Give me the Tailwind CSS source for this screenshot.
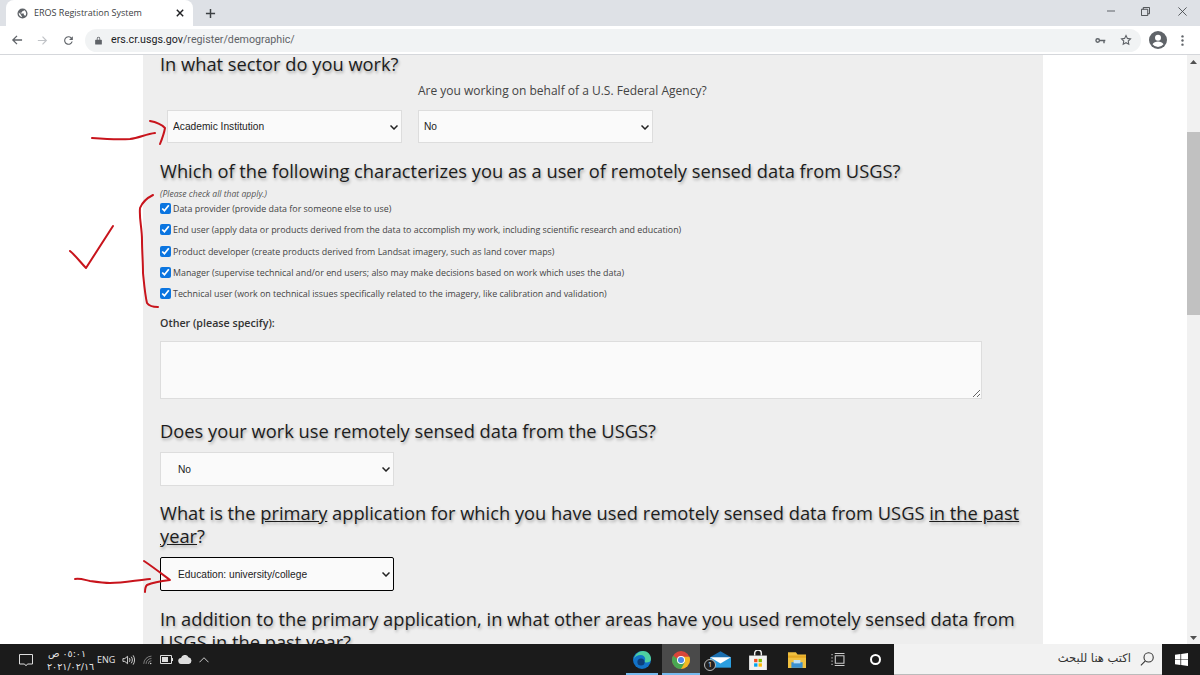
<!DOCTYPE html>
<html lang="en">
<head>
    <meta charset="UTF-8">
    <title>EROS Registration System</title>
    <script src="https://cdn.jsdelivr.net/npm/@tailwindcss/browser@4"></script>
</head>
<body class="h-[675px] w-[1200px] overflow-hidden bg-white font-['Open_Sans',sans-serif] relative flex flex-col">

    <!-- tab strip -->
    <div class="h-[26px] bg-[#dee1e6] flex items-end shrink-0 relative">
        <div class="ml-[6px] w-[187px] h-[26px] bg-white rounded-t-lg flex items-center pl-[11px]">
            <svg class="w-[11px] h-[11px] shrink-0" viewBox="0 0 24 24"><path fill="#5f6368" d="M12 1a11 11 0 1 0 0 22 11 11 0 0 0 0-22zm-1 18.900A8 8 0 0 1 4.200 10L9 15v1c0 1.100.9 2 2 2v1.900zm6.900-2.500A2 2 0 0 0 16 16h-1v-3c0-.6-.4-1-1-1H8v-2h2c.6 0 1-.4 1-1V7h2c1.100 0 2-.9 2-2v-.4a8 8 0 0 1 2.900 12.800z"/></svg>
            <span class="ml-[6px] text-[9px] text-[#3c4043] whitespace-nowrap">EROS Registration System</span>
            <svg class="ml-auto w-[8px] h-[8px] mr-[9px]" viewBox="0 0 10 10"><path d="M1 1l8 8M9 1l-8 8" stroke="#202124" stroke-width="1.800"/></svg>
        </div>
        <svg class="ml-[12px] mb-[7px] w-[11px] h-[11px]" viewBox="0 0 12 12"><path d="M6 1v10M1 6h10" stroke="#3c4043" stroke-width="1.600"/></svg>
        <svg class="absolute left-[1107px] top-[10px] w-[8px] h-[2px]" viewBox="0 0 8 2"><path d="M0 1h8" stroke="#5f6368"/></svg>
        <svg class="absolute left-[1141px] top-[7px] w-[9px] h-[9px]" viewBox="0 0 10 10" fill="none" stroke="#3c4043"><path d="M.5 2.500h7v7h-7zM2.500 2.500v-2h7v7h-2"/></svg>
        <svg class="absolute left-[1178px] top-[7px] w-[9px] h-[9px]" viewBox="0 0 11 11"><path d="M.5.5l10 10M10.500.5l-10 10" stroke="#3c4043"/></svg>
    </div>

    <!-- toolbar -->
    <div class="h-[29px] bg-white border-b border-[#d5d7db] flex items-center shrink-0">
        <svg class="ml-[11px] w-[12px] h-[12px]" viewBox="0 0 13 13" fill="none" stroke="#5f6368" stroke-width="1.400"><path d="M12 6.500H2M6.500 2l-4.500 4.500 4.500 4.500"/></svg>
        <svg class="ml-[14px] w-[11px] h-[11px]" viewBox="0 0 13 13" fill="none" stroke="#c0c3c7" stroke-width="1.400"><path d="M1 6.500h10M6.500 2l4.500 4.500-4.500 4.500"/></svg>
        <svg class="ml-[14px] w-[13px] h-[13px]" viewBox="0 0 24 24"><path fill="#5f6368" d="M17.650 6.350A8 8 0 1 0 19.730 14h-2.080a6 6 0 1 1-1.410-6.240L13 11h7V4l-2.350 2.350z"/></svg>
        <div class="ml-[10px] w-[1056px] h-[23px] rounded-full bg-[#f1f3f4] flex items-center pl-[10px] pr-[9px]">
            <svg class="w-[7px] h-[9px]" viewBox="0 0 9 11"><path fill="#5f6368" d="M1 4.500h7a.8.8 0 0 1 .8.8v4.700a.8.8 0 0 1-.8.800H1a.8.8 0 0 1-.8-.8V5.300A.8.8 0 0 1 1 4.500zM2.300 4.500V3a2.200 2.200 0 0 1 4.400 0v1.500H5.700V3a1.200 1.200 0 0 0-2.400 0v1.500z"/></svg>
            <span class="ml-[9px] text-[10.700px] font-['Roboto',sans-serif] text-[#202124] whitespace-nowrap">ers.cr.usgs.gov<span class="text-[#5f6368]">/register/demographic/</span></span>
            <svg class="ml-auto w-[11px] h-[7px]" viewBox="0 0 12 8" fill="none" stroke="#5f6368" stroke-width="1.600"><circle cx="2.800" cy="4" r="2"/><path d="M5 4h6.500M10 4v3"/></svg>
            <svg class="ml-[14px] w-[12px] h-[12px]" viewBox="0 0 24 24" fill="none" stroke="#5f6368" stroke-width="2.200"><path d="M12 3l2.800 5.800 6.200.9-4.500 4.400 1.100 6.300-5.600-3-5.600 3 1.100-6.300L3 9.700l6.200-.9z"/></svg>
        </div>
        <svg class="ml-[8px] w-[18px] h-[18px]" viewBox="0 0 18 18"><circle cx="9" cy="9" r="9" fill="#5f6368"/><circle cx="9" cy="6.800" r="3" fill="#fff"/><path fill="#fff" d="M3.500 13.300c1-1.900 3.300-2.800 5.500-2.800s4.500.9 5.500 2.800A7 7 0 0 1 9 16a7 7 0 0 1-5.500-2.700z"/></svg>
        <svg class="ml-[14px] w-[3px] h-[11px]" viewBox="0 0 3 12"><g fill="#5f6368"><circle cx="1.500" cy="1.500" r="1.300"/><circle cx="1.500" cy="6" r="1.300"/><circle cx="1.500" cy="10.500" r="1.300"/></g></svg>
    </div>

    <!-- page -->
    <div class="flex-1 min-h-0 flex overflow-hidden">
        <div class="ml-[143px] w-[900px] bg-[#eeeeee] px-[17px] shrink-0 text-[#333] h-full overflow-hidden">
            <h2 class="-mt-[1px] text-[18.300px] leading-[20px] font-medium text-[#1c1c1c] [text-shadow:1px_2px_3px_rgba(0,0,0,0.3)]">In what sector do you work?</h2>
            <div class="flex gap-[16px] pl-[7px] mt-[7px]">
                <div class="w-[235px] pt-[29px]">
                    <div class="relative">
                        <select class="block appearance-none w-full h-[33px] bg-[#fafafa] border border-[#ddd] text-[10.200px] text-[#222] pl-[5px] font-['Liberation_Sans',sans-serif]"><option>Academic Institution</option></select>
                        <svg class="absolute right-[4px] top-[15px] w-[8px] h-[5px]" viewBox="0 0 8 5" fill="none" stroke="#222" stroke-width="1.500"><path d="M.5.5L4 4 7.500.5"/></svg>
                    </div>
                </div>
                <div class="w-[235px]">
                    <div class="text-[12px] leading-[19px] text-[#444] whitespace-nowrap mb-[10px]">Are you working on behalf of a U.S. Federal Agency?</div>
                    <div class="relative">
                        <select class="block appearance-none w-full h-[33px] bg-[#fafafa] border border-[#ddd] text-[10.200px] text-[#222] pl-[5px] font-['Liberation_Sans',sans-serif]"><option>No</option></select>
                        <svg class="absolute right-[4px] top-[15px] w-[8px] h-[5px]" viewBox="0 0 8 5" fill="none" stroke="#222" stroke-width="1.500"><path d="M.5.5L4 4 7.500.5"/></svg>
                    </div>
                </div>
            </div>

            <h2 class="mt-[15px] text-[18.300px] leading-[26px] font-medium text-[#1c1c1c] [text-shadow:1px_2px_3px_rgba(0,0,0,0.3)]">Which of the following characterizes you as a user of remotely sensed data from USGS?</h2>
            <p class="mt-[6px] text-[8.600px] leading-[8px] italic text-[#555]">(Please check all that apply.)</p>
            <ul class="text-[8.900px] text-[#444]">
                <li class="flex items-center h-[21.300px]"><input type="checkbox" checked class="m-0 mr-[2px] w-[11px] h-[11px] accent-[#0b75e0]"><span class="whitespace-nowrap">Data provider (provide data for someone else to use)</span></li>
                <li class="flex items-center h-[21.300px]"><input type="checkbox" checked class="m-0 mr-[2px] w-[11px] h-[11px] accent-[#0b75e0]"><span class="whitespace-nowrap">End user (apply data or products derived from the data to accomplish my work, including scientific research and education)</span></li>
                <li class="flex items-center h-[21.300px]"><input type="checkbox" checked class="m-0 mr-[2px] w-[11px] h-[11px] accent-[#0b75e0]"><span class="whitespace-nowrap">Product developer (create products derived from Landsat imagery, such as land cover maps)</span></li>
                <li class="flex items-center h-[21.300px]"><input type="checkbox" checked class="m-0 mr-[2px] w-[11px] h-[11px] accent-[#0b75e0]"><span class="whitespace-nowrap">Manager (supervise technical and/or end users; also may make decisions based on work which uses the data)</span></li>
                <li class="flex items-center h-[21.300px]"><input type="checkbox" checked class="m-0 mr-[2px] w-[11px] h-[11px] accent-[#0b75e0]"><span class="whitespace-nowrap">Technical user (work on technical issues specifically related to the imagery, like calibration and validation)</span></li>
            </ul>
            <p class="mt-[10px] text-[10.700px] leading-[18px] font-semibold text-[#333]">Other (please specify):</p>
            <textarea class="block mt-[9px] w-[822px] h-[58px] bg-[#fafafa] border border-[#ddd]"></textarea>

            <h2 class="mt-[19px] text-[18.300px] leading-[26px] font-medium text-[#1c1c1c] [text-shadow:1px_2px_3px_rgba(0,0,0,0.3)]">Does your work use remotely sensed data from the USGS?</h2>
            <div class="relative mt-[8px] w-[234px]">
                <select class="block appearance-none w-full h-[34px] bg-[#fafafa] border border-[#ddd] text-[10.200px] text-[#222] pl-[17px] font-['Liberation_Sans',sans-serif]"><option>No</option></select>
                <svg class="absolute right-[4px] top-[15px] w-[8px] h-[5px]" viewBox="0 0 8 5" fill="none" stroke="#222" stroke-width="1.500"><path d="M.5.5L4 4 7.500.5"/></svg>
            </div>

            <h2 class="mt-[15px] text-[18.300px] leading-[23px] font-medium text-[#1c1c1c] [text-shadow:1px_2px_3px_rgba(0,0,0,0.3)]">What is the <u>primary</u> application for which you have used remotely sensed data from USGS <u>in the past year</u>?</h2>
            <div class="relative mt-[10px] w-[234px]">
                <select class="block appearance-none w-full h-[34px] bg-[#fafafa] border border-black rounded-[2px] text-[10.200px] text-[#222] pl-[17px] font-['Liberation_Sans',sans-serif]"><option>Education: university/college</option></select>
                <svg class="absolute right-[4px] top-[15px] w-[8px] h-[5px]" viewBox="0 0 8 5" fill="none" stroke="#222" stroke-width="1.500"><path d="M.5.5L4 4 7.500.5"/></svg>
            </div>

            <h2 class="mt-[16px] text-[18.300px] leading-[23px] font-medium text-[#1c1c1c] [text-shadow:1px_2px_3px_rgba(0,0,0,0.3)]">In addition to the primary application, in what other areas have you used remotely sensed data from USGS in the past year?</h2>
        </div>
        <!-- scrollbar -->
        <div class="ml-auto w-[13px] bg-[#f1f1f1] flex flex-col items-center shrink-0">
            <div class="h-[13px] flex items-center justify-center"><svg class="w-[7px] h-[4px]" viewBox="0 0 7 4"><path d="M3.500 0L7 4H0z" fill="#505050"/></svg></div>
            <div class="mt-[64px] w-full h-[183px] bg-[#c1c1c1]"></div>
            <div class="mt-auto h-[13px] flex items-center justify-center"><svg class="w-[7px] h-[4px]" viewBox="0 0 7 4"><path d="M3.500 4L7 0H0z" fill="#505050"/></svg></div>
        </div>
    </div>

    <!-- taskbar -->
    <div class="h-[31px] bg-[#1b1b1b] flex items-center shrink-0 text-[#e6e6e6]">
        <svg class="ml-[19px] w-[14px] h-[14px]" viewBox="0 0 14 14" fill="none" stroke="#ddd"><path d="M.5 1.500h13v9.500H8.500L7 12.800 5.500 11H.5z"/></svg>
        <div class="ml-[14px] w-[40px] text-[9.500px] leading-[13px] text-center font-['DejaVu_Sans',sans-serif] whitespace-nowrap">
            <div dir="rtl">٠٥:٠١ ص</div>
            <div>٢٠٢١/٠٢/١٦</div>
        </div>
        <span class="ml-[10px] w-[17px] text-[9px]">ENG</span>
        <svg class="ml-[8px] w-[13px] h-[12px]" viewBox="0 0 14 12" fill="none" stroke="#ddd"><path d="M1 4.500h2L6 2v8L3 7.500H1zM8 4c.7 1 .7 3 0 4M10 2.500c1.500 2 1.500 5 0 7M12 1c2 3 2 7 0 10"/></svg>
        <svg class="ml-[8px] w-[10px] h-[10px]" viewBox="0 0 13 12" fill="none" stroke="#999"><path d="M1 11a10 10 0 0 1 10-10M4 11a7 7 0 0 1 7-7M7 11a4 4 0 0 1 4-4"/><circle cx="10" cy="10.500" r="1" fill="#ddd" stroke="none"/></svg>
        <svg class="ml-[7px] w-[13px] h-[9px]" viewBox="0 0 13 9"><path d="M.5.500h11v8H.5z" fill="none" stroke="#ddd"/><rect x="2" y="2" width="6" height="5" fill="#ddd"/><rect x="12" y="3" width="1" height="3" fill="#ddd"/></svg>
        <svg class="ml-[5px] w-[14px] h-[9px]" viewBox="0 0 14 9"><path fill="#ddd" d="M3.500 9a3 3 0 0 1-.5-6 4 4 0 0 1 7.500-.8A3.500 3.500 0 0 1 11 9z"/></svg>
        <svg class="ml-[7px] w-[10px] h-[6px]" viewBox="0 0 11 6" fill="none" stroke="#ddd"><path d="M.5 5.500l5-5 5 5"/></svg>

        <div class="ml-[417px] relative w-[32px] h-[31px] flex items-center justify-center">
            <svg class="w-[18px] h-[18px]" viewBox="0 0 18 18"><circle cx="9" cy="9" r="9" fill="#1273c8"/><path fill="#4fd0a0" d="M1 8c1-5 5-8 9-8 4.500 0 8 3.500 8 8 0 2.500-2 3.500-4.500 3.500-1 0-2-.5-2-1 0-.5.7-1 .7-2.500 0-2-2-4-4.500-4C4.500 4 2 5.500 1 8z"/><circle cx="8" cy="11" r="3.600" fill="#0d3f7a"/></svg>
            <div class="absolute left-0 right-0 bottom-0 h-[2px] bg-[#76b9ed]"></div>
        </div>
        <div class="ml-[4px] relative w-[38px] h-[31px] bg-[#4a4a4a] flex items-center justify-center">
            <svg class="w-[18px] h-[18px]" viewBox="0 0 18 18"><circle cx="9" cy="9" r="9" fill="#d9453a"/><path fill="#f2b824" d="M9 18a9 9 0 0 0 9-9c0-1.200-.2-2.300-.6-3.300H9L9 18z"/><path fill="#4aa651" d="M1.200 4.500A9 9 0 0 0 9 18l4-7H9z"/><circle cx="9" cy="9" r="4" fill="#fff"/><circle cx="9" cy="9" r="3" fill="#4a86e8"/></svg>
            <div class="absolute left-0 right-0 bottom-0 h-[2px] bg-[#76b9ed]"></div>
        </div>
        <div class="relative w-[40px] h-[31px] flex items-center justify-center">
            <svg class="w-[21px] h-[17px]" viewBox="0 0 18 14"><path fill="#2a9ee0" d="M0 5h18v9H0z"/><path fill="#1a6fb0" d="M0 5l9-5 9 5-9 5z"/><path fill="#fff" d="M0 5h18L9 10.500z"/></svg>
            <div class="absolute left-[4px] top-[15px] w-[12px] h-[12px] rounded-full border border-[#bbb] bg-[#222] text-[7px] leading-[10px] text-center text-white">1</div>
        </div>
        <div class="w-[36px] h-[31px] flex items-center justify-center">
            <svg class="w-[18px] h-[20px]" viewBox="0 0 16 18"><path d="M5 5V3a3 3 0 0 1 6 0v2" fill="none" stroke="#eee" stroke-width="1.300"/><path fill="#f2f2f2" d="M0 5h16v13H0z"/><rect x="4.500" y="8" width="3" height="3" fill="#f25022"/><rect x="8.500" y="8" width="3" height="3" fill="#7fba00"/><rect x="4.500" y="12" width="3" height="3" fill="#00a4ef"/><rect x="8.500" y="12" width="3" height="3" fill="#ffb900"/></svg>
        </div>
        <div class="w-[42px] h-[31px] flex items-center justify-center">
            <svg class="w-[18px] h-[16px]" viewBox="0 0 16 14"><path fill="#f0c040" d="M0 0h7l1.500 2H16v12H0z"/><path fill="#e5a823" d="M0 3h16v2H0z"/><path fill="#3a8fd0" d="M3 9h10v5H3z"/><path fill="#bfe0f5" d="M5 7h6v3H5z"/></svg>
        </div>
        <div class="w-[40px] h-[31px] flex items-center justify-center">
            <svg class="w-[14px] h-[13px]" viewBox="0 0 12 12" fill="none" stroke="#ccc"><path d="M3.500 2.500h8v7h-8zM3 .5h9M3 11.500h9M.5 1v1M.5 4v1M.5 7v1M.5 10v1"/></svg>
        </div>
        <div class="w-[34px] h-[31px] flex items-center justify-center">
            <div class="w-[11px] h-[11px] rounded-full border-2 border-white"></div>
        </div>
        <div class="ml-[2px] w-[268px] h-[31px] bg-[#f2f2f2] border-b border-[#bbb] flex items-center justify-end pr-[8px] gap-[9px]">
            <span dir="rtl" class="text-[11.500px] text-[#333] font-['DejaVu_Sans',sans-serif]">اكتب هنا للبحث</span>
            <svg class="w-[14px] h-[14px]" viewBox="0 0 13 13" fill="none" stroke="#333"><circle cx="8" cy="5" r="4.300"/><path d="M5 8.200L.8 12.400"/></svg>
        </div>
        <div class="w-[38px] flex justify-center">
            <svg class="w-[13px] h-[13px]" viewBox="0 0 12 12" fill="#fff"><path d="M0 1.700l5-.7v4.700H0zM5.700.9L12 0v5.700H5.700zM0 6.300h5V11l-5-.7zM5.700 6.300H12V12l-6.300-.9z"/></svg>
        </div>
    </div>

    <!-- red pen marks drawn over the screenshot -->
    <svg class="absolute left-0 top-0 w-[1200px] h-[675px] pointer-events-none" viewBox="0 0 1200 675" fill="none" stroke="#c8141c" stroke-width="2" stroke-linecap="round" stroke-linejoin="round">
        <path d="M92 138c12 1 26 2 38 1 9-1 16-5 25-6"/>
        <path d="M150 121c6 1 11 3 15 7-1 6-3 11-5 16"/>
        <path d="M153 195c-6 3-11 8-13 13-1 10 2 20 2 32 0 11 1 22 1 33 1 10 2 22 4 30 2 3 7 4 11 4"/>
        <path d="M70 251c6 5 11 12 16 17 9-14 18-28 27-42"/>
        <path d="M75 579c5-1 10 1 15 2 7 1 14 2 20 2 14 0 27-3 40-4"/>
        <path d="M144 561c9 6 18 13 26 19-8 1-16 2-23 5-2 2-2 4-2 7"/>
    </svg>
</body>
</html>
